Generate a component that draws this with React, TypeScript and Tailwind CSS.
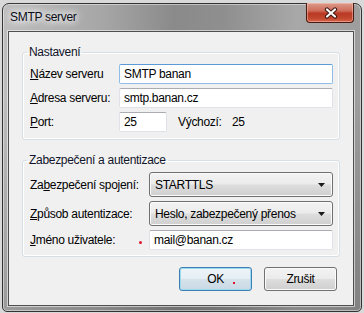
const font = "font-['Liberation_Sans',Arial,sans-serif] text-[12px] tracking-[-0.3px] text-black";

function TextBox({ value, focused, width }: { value: string; focused?: boolean; width: string }) {
  return (
    <div
      className={`${width} h-[20px] flex items-center pl-[4px] bg-white rounded-[2px] border ${
        focused
          ? "border-[#8fbde9] border-t-[#5a9ad6]"
          : "border-[#dfe3e8] border-t-[#abadb3]"
      }`}
    >
      {value}
    </div>
  );
}

function Select({ value }: { value: string }) {
  return (
    <div className="w-[184px] h-[25px] flex items-center justify-between pl-[5px] pr-[7px] rounded-[3px] border border-[#707070] bg-[linear-gradient(to_bottom,#f3f3f3_0%,#ebebeb_48%,#dddddd_52%,#cfcfcf_100%)] shadow-[inset_0_0_0_1px_#fbfbfb]">
      <span>{value}</span>
      <svg width="7" height="4" viewBox="0 0 7 4">
        <path d="M0 0h7L3.5 4z" fill="#1a1a1a" />
      </svg>
    </div>
  );
}

function Label({ width, children }: { width: string; children: React.ReactNode }) {
  return <div className={`${width} shrink-0 flex items-center`}>{children}</div>;
}

export default function App() {
  return (
    <div className={`w-[364px] h-[313px] overflow-hidden bg-[#d9d9d9] pt-[3px] pl-[2px] ${font}`}>
      <div className="w-[360px] h-[309px] flex flex-col rounded-t-[7px] rounded-b-[5px] border border-[#333333] pl-[5px] pr-[7px] pb-[5px] shadow-[inset_0_0_0_1px_rgba(255,255,255,0.45)] bg-[linear-gradient(to_bottom,rgba(0,0,0,0)_0%,rgba(0,0,0,0)_30%,rgba(0,0,0,0.18)_100%),linear-gradient(to_right,#bdbdbd_0%,#a6a6a6_28%,#8a8a8a_48%,#8f8f8f_62%,#a8a8a8_82%,#9d9d9d_100%)]">
        {/* title bar */}
        <div className="h-[27px] shrink-0 flex items-start justify-between">
          <span className="mt-[6px] ml-[2px] leading-[15px] text-[12px] text-[#0b0b18] [text-shadow:0_0_6px_#fff,0_0_10px_#fff,0_0_14px_#fff]">
            SMTP server
          </span>
          <div className="-mt-[1px] w-[48px] h-[20px] flex items-center justify-center rounded-b-[4px] border border-[#4a1a12] border-t-0 shadow-[inset_0_0_0_1px_rgba(255,210,200,0.45)] bg-[linear-gradient(to_bottom,#dc9a8a_0%,#cf6e5a_40%,#b83a24_55%,#c2462e_80%,#d8664a_100%)]">
            <svg width="14" height="12" viewBox="0 0 14 12" className="ml-[2px]">
              <path d="M3 2.5l8 7M11 2.5l-8 7" stroke="#3b1711" strokeWidth="4.2" strokeLinecap="round" />
              <path d="M3 2.5l8 7M11 2.5l-8 7" stroke="#ffffff" strokeWidth="2.2" strokeLinecap="round" />
            </svg>
          </div>
        </div>

        {/* client area */}
        <div className="flex-1 flex flex-col border border-[#4f4f4f] bg-[#f0f0f0] shadow-[0_0_0_1px_rgba(255,255,255,0.55)]">
          <fieldset className="mt-[13px] ml-[13px] w-[318px] rounded-[3px] border border-[#d5dfe5] shadow-[inset_0_0_0_1px_#ffffff]">
            <legend className="ml-[4px] px-[2px] leading-[15px] text-[#10142a]">Nastavení</legend>
            <div className="pl-[7px] pt-[4px] pb-[7px] flex flex-col gap-[4px]">
              <div className="flex items-center">
                <Label width="w-[89px]">
                  <span><span className="underline">N</span>ázev serveru</span>
                </Label>
                <TextBox value="SMTP banan" focused width="w-[214px]" />
              </div>
              <div className="flex items-center">
                <Label width="w-[89px]">
                  <span><span className="underline">A</span>dresa serveru:</span>
                </Label>
                <TextBox value="smtp.banan.cz" width="w-[214px]" />
              </div>
              <div className="flex items-center">
                <Label width="w-[89px]">
                  <span><span className="underline">P</span>ort:</span>
                </Label>
                <TextBox value="25" width="w-[48px]" />
                <span className="ml-[11px] w-[54px]">Výchozí:</span>
                <span>25</span>
              </div>
            </div>
          </fieldset>

          <fieldset className="mt-[13px] ml-[13px] w-[318px] rounded-[3px] border border-[#d5dfe5] shadow-[inset_0_0_0_1px_#ffffff]">
            <legend className="ml-[4px] px-[2px] leading-[15px] text-[#10142a]">Zabezpečení a autentizace</legend>
            <div className="pl-[7px] pt-[4px] pb-[6px] flex flex-col gap-[4px]">
              <div className="flex items-center">
                <Label width="w-[119px]">
                  <span>Za<span className="underline">b</span>ezpečení spojení:</span>
                </Label>
                <Select value="STARTTLS" />
              </div>
              <div className="flex items-center">
                <Label width="w-[119px]">
                  <span><span className="underline">Z</span>působ autentizace:</span>
                </Label>
                <Select value="Heslo, zabezpečený přenos" />
              </div>
              <div className="flex items-center">
                <Label width="w-[119px]">
                  <span><span className="underline">J</span>méno uživatele:</span>
                  <span className="ml-auto mr-[7px] mt-[5px] w-[3px] h-[3px] rounded-full bg-[#e0142e]" />
                </Label>
                <TextBox value="mail@banan.cz" width="w-[184px]" />
              </div>
            </div>
          </fieldset>

          <div className="mt-[10px] pr-[16px] flex justify-end gap-[12px]">
            <button className="relative w-[73px] h-[24px] rounded-[3px] border border-[#3c7fb1] bg-[linear-gradient(to_bottom,#eef4f8_0%,#e5eef4_48%,#d5e2ea_52%,#c9d9e4_100%)] shadow-[inset_0_0_0_1px_#9fd8f3]">
              OK
              <span className="absolute left-[53px] top-[14px] w-[2px] h-[2px] bg-[#e0142e]" />
            </button>
            <button className="w-[73px] h-[24px] rounded-[3px] border border-[#707070] bg-[linear-gradient(to_bottom,#f3f3f3_0%,#ebebeb_48%,#dddddd_52%,#cfcfcf_100%)] shadow-[inset_0_0_0_1px_#fbfbfb]">
              Zrušit
            </button>
          </div>
        </div>
      </div>
    </div>
  );
}
